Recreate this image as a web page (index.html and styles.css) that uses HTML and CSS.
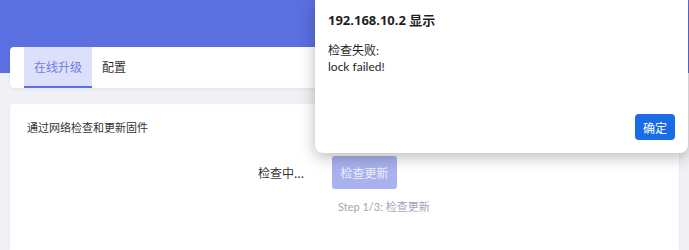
FILE: index.html
```html
<!DOCTYPE html>
<html lang="zh">
<head>
    <meta charset="UTF-8">
    <meta name="viewport" content="width=device-width, initial-scale=1.0">
    <title>固件升级</title>
    <link rel="stylesheet" href="styles.css">
</head>
<body>
    <div class="page-header"></div>

    <div class="main">
        <!-- 标签页 -->
        <div class="tabs">
            <div class="tab active">在线升级</div>
            <div class="tab">配置</div>
        </div>

        <!-- 在线升级 -->
        <div class="card">
            <div class="card-title">通过网络检查和更新固件</div>
            <div class="check-body">
                <div class="check-label">检查中...</div>
                <div><button class="btn-primary" disabled>检查更新</button></div>
                <div></div>
                <div class="step-text">Step 1/3: 检查更新</div>
            </div>
        </div>
    </div>

    <!-- 浏览器提示框 -->
    <div class="alert-dialog">
        <div class="alert-title">192.168.10.2 显示</div>
        <div class="alert-message">检查失败:<br>lock failed!</div>
        <div class="alert-actions">
            <button class="alert-ok">确定</button>
        </div>
    </div>
</body>
</html>
```

FILE: styles.css
```css
body {
    margin: 0;
    height: 250px;
    overflow: hidden;
    background-color: #f0f1f4;
    font-family: "Noto Sans", "Noto Sans CJK SC", sans-serif;
    font-size: 12px;
    color: #333;
}
.page-header {
    height: 73px;
    background-color: #5b70e0;
}
.main {
    margin-top: -26px;
    padding: 0 10px;
    display: flex;
    flex-direction: column;
    gap: 16px;
}
.tabs {
    display: flex;
    height: 41px;
    padding-left: 14px;
    background-color: #fff;
    border-radius: 4px;
    box-shadow: 0 1px 3px rgba(0, 0, 0, 0.06);
}
.tab {
    display: flex;
    align-items: center;
    padding: 0 10px;
    font-family: "Noto Sans CJK SC", sans-serif;
    font-size: 12px;
    color: #333;
    border-bottom: 2px solid transparent;
}
.tab.active {
    background-color: #dde0fb;
    color: #6d7ddf;
    border-bottom-color: #5b70e0;
}
.card {
    height: 146px;
    box-sizing: border-box;
    padding: 15px 17px;
    background-color: #fff;
    border-radius: 4px 4px 0 0;
    box-shadow: 0 1px 3px rgba(0, 0, 0, 0.06);
}
.card-title {
    font-family: "Noto Sans CJK SC", sans-serif;
    font-size: 11px;
    line-height: 17px;
    color: #333;
}
.check-body {
    display: grid;
    grid-template-columns: 279px auto;
    column-gap: 26px;
    row-gap: 9px;
    margin-top: 20px;
    align-items: center;
}
.check-label {
    text-align: right;
    font-family: "Noto Sans CJK SC", sans-serif;
    font-size: 12px;
    color: #333;
    padding-right: 2px;
}
.btn-primary {
    width: 65px;
    height: 33px;
    border: none;
    border-radius: 3px;
    background-color: #a9b1ee;
    color: #eef0fc;
    font-family: "Noto Sans CJK SC", sans-serif;
    font-size: 12px;
}
.step-text {
    padding-left: 6px;
    font-family: "Lato", "Noto Sans CJK SC", sans-serif;
    font-size: 11px;
    color: #a2a5b8;
}
.alert-dialog {
    position: absolute;
    top: 0;
    left: 315px;
    width: 373px;
    height: 153px;
    box-sizing: border-box;
    padding: 10px 13px 13px;
    display: flex;
    flex-direction: column;
    background-color: #fff;
    border-radius: 0 0 8px 8px;
    box-shadow: 0 4px 16px rgba(0, 0, 0, 0.28);
    color: #1f1f1f;
}
.alert-title {
    font-size: 13px;
    font-weight: bold;
    line-height: 20px;
    color: #1f1f1f;
}
.alert-message {
    margin-top: 13px;
    font-family: "Lato", "Noto Sans CJK SC", sans-serif;
    font-size: 12px;
    line-height: 16px;
}
.alert-actions {
    margin-top: auto;
    display: flex;
    justify-content: flex-end;
}
.alert-ok {
    width: 40px;
    height: 26px;
    border: none;
    border-radius: 4px;
    background-color: #1a6be6;
    color: #fff;
    font-family: "Noto Sans CJK SC", sans-serif;
    font-size: 12px;
}
```
